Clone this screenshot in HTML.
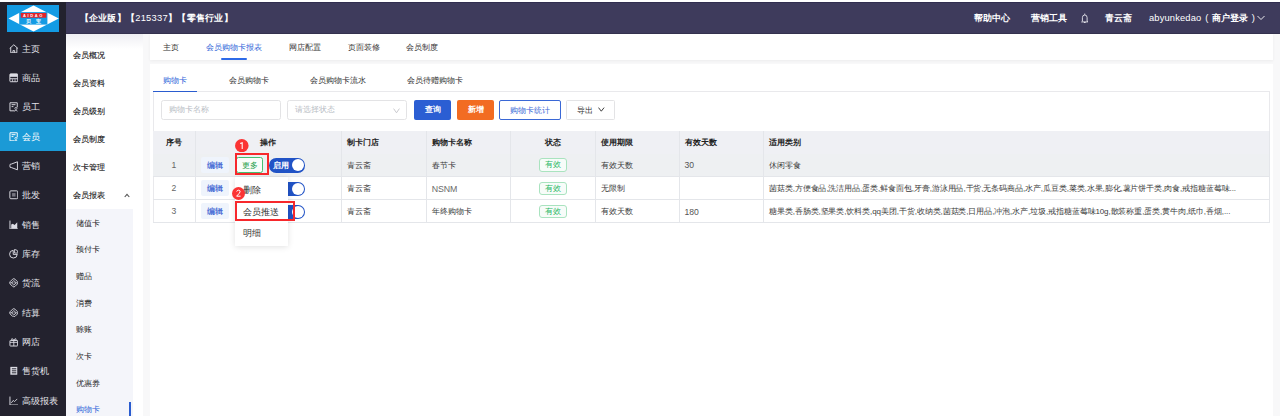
<!DOCTYPE html>
<html><head><meta charset="utf-8">
<style>
*{box-sizing:border-box;margin:0;padding:0}
svg{display:block}
html,body{width:1280px;height:416px;overflow:hidden}
body{position:relative;font-family:"Liberation Sans",sans-serif;background:#f8f8f9;color:#333}
.a{position:absolute;white-space:nowrap}
#top{left:0;top:0;width:1280px;height:2px;background:#fff}
#hdr{left:0;top:2px;width:1280px;height:32px;background:#3e3b5c;border-top:1px solid #312e50;border-bottom:1px solid #35324f}
#side{left:0;top:2px;width:66px;height:414px;background:#23222e}
#logo{left:7px;top:5px;width:52px;height:27px;background:#139be4;overflow:hidden}
.ht{color:#fff;font-size:9.33px;line-height:12px;font-weight:bold}
.hr{color:#fff;font-size:9.33px;line-height:12px;font-weight:bold}
.nav{left:0;width:66px;height:29.33px;color:#e4e4ea;font-size:9.33px;line-height:29.33px}
.nav .ic{position:absolute;left:8.5px;top:9.8px;width:9.6px;height:9.6px}
.nav span{position:absolute;left:22px;top:0.7px}
.nav.on{background:#1b9ad6;color:#fff}
#sub{left:66px;top:34px;width:77px;height:382px;background:linear-gradient(#efeff3,#fff 15px)}
.si{left:73px;margin-top:0.6px;font-size:8px;line-height:12px;color:#111;font-weight:normal;-webkit-text-stroke:0.1px #111}
#subbg{left:66px;top:208.5px;width:67px;height:208px;background:#f4f5fa}
.ssi{left:76px;font-size:8px;line-height:12px;color:#1f1f1f;margin-top:0.5px}
#tabbar{left:150px;top:34px;width:1123px;height:26.3px;background:#fff;box-shadow:0 1px 3px rgba(0,0,0,0.05)}
#card{left:150px;top:64px;width:1123px;height:352px;background:#fff}
.tb{font-size:8px;line-height:12px;color:#333}
.blue{color:#3065d9}
#box{left:153px;top:91px;width:1117px;height:132px;border:1px solid #e9e9ec}
.inp{top:100px;height:20px;border:1px solid #e3e3e5;border-radius:2.5px;background:#fff;font-size:8px;line-height:18.8px;color:#b8bcc4;padding-left:7px}
.btn{top:100px;height:20px;border-radius:2px;font-size:8px;line-height:20.5px;text-align:center;color:#fff;font-weight:bold}
table{position:absolute;left:153px;top:131px;width:1117px;border-collapse:collapse;table-layout:fixed;font-size:8px;color:#3a3a3a}
td,th{border-right:1px solid #e4e6ea;border-bottom:1px solid #e4e6ea;padding:0 0 0 5px;text-align:left;white-space:nowrap;overflow:hidden;text-overflow:ellipsis}
th{height:22.8px;background:#eff0f4;border-bottom:none;font-weight:bold;color:#222}
td{height:23px;padding-top:0.8px}
tr.hov td{background:#eef0f2}
.c{text-align:center;padding:0}
.badge{display:inline-block;vertical-align:middle;width:28px;height:13.2px;border:1px solid #a9e3bf;border-radius:3px;background:#f7fcf9;color:#2cb865;line-height:12.4px;font-size:8px;text-align:center}
</style></head><body>
<div class="a" id="top"></div>
<div class="a" id="hdr"></div>
<div class="a" id="side"></div>
<div class="a" id="logo">
<svg width="52" height="27" viewBox="0 0 52 27"><polygon points="1.5,13.6 26.5,0.6 51.8,13.6 26.5,26.6" fill="#fff"/><rect x="12.2" y="7.1" width="28.2" height="12.5" fill="#139be4"/><rect x="13.8" y="8" width="25.5" height="4.7" fill="#e2232a"/><text x="26.5" y="11.8" font-size="4" fill="#fff" text-anchor="middle" font-family="Liberation Sans" font-weight="bold" letter-spacing="1.6">AIDAO</text><text x="26.5" y="18.2" font-size="4.8" fill="#fff" text-anchor="middle" font-weight="bold">贝　宝</text></svg>
</div>
<div class="a ht" style="left:79.5px;top:12px;letter-spacing:0.28px;font-size:9.33px">【企业版】【<span style="font-weight:normal">215337</span>】【零售行业】</div>
<div class="a hr" style="left:974px;top:12px">帮助中心</div>
<div class="a hr" style="left:1031px;top:12px">营销工具</div>
<div class="a" style="left:1080.5px;top:13px"><svg width="7.5" height="10" viewBox="0 0 7.5 10"><path d="M1.4 8.2V4.6A2.35 2.6 0 0 1 6.1 4.6V8.2L6.9 8.9H0.6Z" fill="none" stroke="#f0f0f5" stroke-width="0.85"/><path d="M3.75 0.6V1.8M2.9 9.5H4.6" stroke="#f0f0f5" stroke-width="0.9"/></svg></div>
<div class="a hr" style="left:1105px;top:12px">青云斋</div>
<div class="a hr" style="left:1149px;top:12px"><span style="font-weight:normal;letter-spacing:0.15px">abyunkedao</span><span style="font-weight:normal;word-spacing:1.2px"> ( </span>商户登录<span style="font-weight:normal;word-spacing:1.2px"> )</span></div>
<div class="a" style="left:1257px;top:15px"><svg width="8" height="6" viewBox="0 0 8 6"><path d="M0.5 1L4 4.5L7.5 1" fill="none" stroke="#fff" stroke-width="0.9"/></svg></div>

<!-- nav -->
<div class="a nav" style="top:34.00px"><svg class="ic" viewBox="0 0 10 10"><path d="M0.7 4.7L5 0.8L9.3 4.7M1.8 3.8V9.2H8.2V3.8M4.1 9.2V6.9H5.9V9.2" fill="none" stroke="#dcdce4" stroke-width="1"/></svg><span>主页</span></div>
<div class="a nav" style="top:63.33px"><svg class="ic" viewBox="0 0 10 10"><rect x="0.9" y="0.9" width="8.2" height="8.2" rx="0.8" fill="none" stroke="#dcdce4" stroke-width="1"/><rect x="1" y="1" width="8" height="3" fill="#dcdce4"/><path d="M1 6H9" stroke="#dcdce4" stroke-width="1"/><path d="M3.7 6.5V9M6.3 6.5V9" stroke="#dcdce4" stroke-width="0.8"/></svg><span>商品</span></div>
<div class="a nav" style="top:92.67px"><svg class="ic" viewBox="0 0 10 10"><path d="M5.8 9.2H1V0.8H8.6V5.6M2.7 2.8H6.8M2.7 4.8H4.6" fill="none" stroke="#dcdce4" stroke-width="1"/><circle cx="7.2" cy="6.7" r="1.1" fill="none" stroke="#dcdce4" stroke-width="0.8"/><path d="M5.6 9.6Q7.2 7.6 8.9 9.6" fill="none" stroke="#dcdce4" stroke-width="0.8"/></svg><span>员工</span></div>
<div class="a nav on" style="top:122.00px"><svg class="ic" viewBox="0 0 10 10"><path d="M5.8 9.2H1V0.8H8.6V5.6M2.7 2.8H6.8M2.7 4.8H4.6" fill="none" stroke="#ffffff" stroke-width="1"/><circle cx="7.2" cy="6.7" r="1.1" fill="none" stroke="#ffffff" stroke-width="0.8"/><path d="M5.6 9.6Q7.2 7.6 8.9 9.6" fill="none" stroke="#ffffff" stroke-width="0.8"/></svg><span>会员</span></div>
<div class="a nav" style="top:151.33px"><svg class="ic" viewBox="0 0 10 10"><path d="M1.2 3.4Q0.6 5 1.2 6.6L2.4 6.8L8.8 9.2V0.8L2.4 3.2Z" fill="none" stroke="#dcdce4" stroke-width="1"/></svg><span>营销</span></div>
<div class="a nav" style="top:180.67px"><svg class="ic" viewBox="0 0 10 10"><rect x="0.9" y="0.9" width="8.2" height="8.2" rx="1" fill="none" stroke="#dcdce4" stroke-width="1"/><rect x="3.2" y="3.2" width="3.6" height="3.6" fill="#dcdce4" opacity="0.45"/></svg><span>批发</span></div>
<div class="a nav" style="top:210.00px"><svg class="ic" viewBox="0 0 10 10"><path d="M1 0.6V9.4H9.4" fill="none" stroke="#dcdce4" stroke-width="1"/><path d="M2.3 9V4.8L4 3.8L5.8 5.2L8.6 2.3V9Z" fill="#dcdce4"/></svg><span>销售</span></div>
<div class="a nav" style="top:239.33px"><svg class="ic" viewBox="0 0 10 10"><path d="M4.4 1.4A4 4 0 1 0 8.6 5.6H4.4Z" fill="none" stroke="#dcdce4" stroke-width="1"/><path d="M5.8 0.4V4.2H9.6A4 4 0 0 0 5.8 0.4Z" fill="none" stroke="#dcdce4" stroke-width="0.9"/></svg><span>库存</span></div>
<div class="a nav" style="top:268.67px"><svg class="ic" viewBox="0 0 10 10"><path d="M3.8 1.2Q5 0.2 6.2 1.2L8.8 3.8Q9.8 5 8.8 6.2L6.2 8.8Q5 9.8 3.8 8.8L1.2 6.2Q0.2 5 1.2 3.8Z" fill="none" stroke="#d6d6de" stroke-width="1"/><path d="M5 2.6L7.4 5L5 7.4L2.6 5Z" fill="none" stroke="#d6d6de" stroke-width="0.9"/><path d="M1 5H9" stroke="#d6d6de" stroke-width="0.7"/><circle cx="5" cy="5" r="0.6" fill="#23222e"/></svg><span>货流</span></div>
<div class="a nav" style="top:298.00px"><svg class="ic" viewBox="0 0 10 10"><path d="M3.8 1.2Q5 0.2 6.2 1.2L8.8 3.8Q9.8 5 8.8 6.2L6.2 8.8Q5 9.8 3.8 8.8L1.2 6.2Q0.2 5 1.2 3.8Z" fill="none" stroke="#d6d6de" stroke-width="1"/><path d="M5 2.6L7.4 5L5 7.4L2.6 5Z" fill="none" stroke="#d6d6de" stroke-width="0.9"/><path d="M1 5H9" stroke="#d6d6de" stroke-width="0.7"/><circle cx="5" cy="5" r="0.6" fill="#23222e"/></svg><span>结算</span></div>
<div class="a nav" style="top:327.33px"><svg class="ic" viewBox="0 0 10 10"><rect x="1" y="3.6" width="8" height="5.8" rx="0.5" fill="none" stroke="#dcdce4" stroke-width="1"/><path d="M1 5.6H9M5 3.6V9.4" stroke="#dcdce4" stroke-width="0.9"/><path d="M5 3.4Q3.4 0.4 2.4 2.2Q2.2 3.2 5 3.4Q7.8 3.2 7.6 2.2Q6.6 0.4 5 3.4" fill="none" stroke="#dcdce4" stroke-width="0.8"/></svg><span>网店</span></div>
<div class="a nav" style="top:356.67px"><svg class="ic" viewBox="0 0 10 10"><rect x="1.4" y="0.9" width="7.2" height="8.2" fill="#dcdce4"/><path d="M3 2.9H7.6M3 5H7.6M3 7.1H7.6" stroke="#23222e" stroke-width="1"/></svg><span>售货机</span></div>
<div class="a nav" style="top:386.00px"><svg class="ic" viewBox="0 0 10 10"><path d="M1 0.6V9.4H9.6" fill="none" stroke="#dcdce4" stroke-width="1"/><path d="M2.4 7.2L4.4 4.6L5.8 5.8L8.6 3" fill="none" stroke="#dcdce4" stroke-width="0.9"/></svg><span>高级报表</span></div>

<!-- submenu -->
<div class="a" id="sub"></div>
<div class="a si" style="top:49px">会员概况</div>
<div class="a si" style="top:77px">会员资料</div>
<div class="a si" style="top:105px">会员级别</div>
<div class="a si" style="top:133px">会员制度</div>
<div class="a si" style="top:161px">次卡管理</div>
<div class="a si" style="top:189px">会员报表</div>
<div class="a" style="left:123.5px;top:192.5px"><svg width="6" height="5" viewBox="0 0 6 5"><path d="M0.7 4L3 1.3L5.3 4" fill="none" stroke="#555" stroke-width="1.1"/></svg></div>
<div class="a" id="subbg"></div>
<div class="a ssi" style="top:217px">储值卡</div>
<div class="a ssi" style="top:243.6px">预付卡</div>
<div class="a ssi" style="top:270.3px">赠品</div>
<div class="a ssi" style="top:297px">消费</div>
<div class="a ssi" style="top:323.6px">赊账</div>
<div class="a ssi" style="top:350.3px">次卡</div>
<div class="a ssi" style="top:377px">优惠券</div>
<div class="a ssi blue" style="top:403.6px">购物卡</div>
<div class="a" style="left:129px;top:402px;width:2px;height:14px;background:#2a5ccf"></div>

<!-- main -->
<div class="a" id="tabbar"></div>
<div class="a tb" style="left:163px;top:41.5px">主页</div>
<div class="a tb blue" style="left:206px;top:41.5px">会员购物卡报表</div>
<div class="a" style="left:221.3px;top:57.5px;width:25.7px;height:2px;background:#2d6ae8;border-radius:1px"></div>
<div class="a tb" style="left:288.5px;top:41.5px">网店配置</div>
<div class="a tb" style="left:347.5px;top:41.5px">页面装修</div>
<div class="a tb" style="left:405.5px;top:41.5px">会员制度</div>

<div class="a" id="card"></div>
<div class="a" id="box"></div>
<div class="a tb blue" style="left:163px;top:74.5px">购物卡</div>
<div class="a tb" style="left:228.5px;top:74.5px">会员购物卡</div>
<div class="a tb" style="left:310px;top:74.5px">会员购物卡流水</div>
<div class="a tb" style="left:407px;top:74.5px">会员待赠购物卡</div>
<div class="a" style="left:153px;top:90.5px;width:44px;height:1.6px;background:#2a5ccf"></div>

<div class="a inp" style="left:160.5px;width:120px">购物卡名称</div>
<div class="a inp" style="left:287px;width:120px">请选择状态</div>
<div class="a" style="left:392.5px;top:107.6px"><svg width="7" height="5.6" viewBox="0 0 7 5.6"><path d="M0.6 0.6L3.5 4.8L6.4 0.6" fill="none" stroke="#c4c4c8" stroke-width="0.9"/></svg></div>
<div class="a btn" style="left:414px;width:37px;background:#2b5ed3">查询</div>
<div class="a btn" style="left:457px;width:37px;background:#f26c22">新增</div>
<div class="a btn" style="left:499px;width:62px;border:1px solid #3a68d6;color:#3a68d6;line-height:19px;background:#fff;font-weight:normal">购物卡统计</div>
<div class="a btn" style="left:566px;width:49px;border:1px solid #e3e3e5;border-radius:1.5px;color:#333;line-height:19.5px;background:#fff;text-align:left;padding-left:10px;font-weight:normal">导出</div>
<div class="a" style="left:598px;top:106.6px"><svg width="6.6" height="5" viewBox="0 0 6.6 5"><path d="M0.5 0.6L3.3 4.2L6.1 0.6" fill="none" stroke="#333" stroke-width="0.95"/></svg></div>

<table>
<colgroup><col style="width:42.3px"><col style="width:146px"><col style="width:85px"><col style="width:84.2px"><col style="width:84.7px"><col style="width:83.9px"><col style="width:84.4px"><col></colgroup>
<tr><th class="c">序号</th><th class="c">操作</th><th>制卡门店</th><th>购物卡名称</th><th class="c">状态</th><th>使用期限</th><th>有效天数</th><th>适用类别</th></tr>
<tr class="hov"><td class="c" style="color:#666;font-size:8.6px">1</td><td></td><td>青云斋</td><td>春节卡</td><td class="c"><span class="badge">有效</span></td><td>有效天数</td><td style="color:#555;font-size:8.6px">30</td><td>休闲零食</td></tr>
<tr><td class="c" style="color:#666;font-size:8.6px">2</td><td></td><td>青云斋</td><td style="color:#6a6a6a;font-size:8.8px;letter-spacing:-0.1px">NSNM</td><td class="c"><span class="badge">有效</span></td><td>无限制</td><td></td><td style="letter-spacing:-0.1px">菌菇类,方便食品,洗洁用品,蛋类,鲜食面包,牙膏,游泳用品,干货,无条码商品,水产,瓜豆类,菜类,水果,膨化,薯片饼干类,肉食,戒指糖蓝莓味...</td></tr>
<tr><td class="c" style="color:#666;font-size:8.6px">3</td><td></td><td>青云斋</td><td>年终购物卡</td><td class="c"><span class="badge">有效</span></td><td>有效天数</td><td style="color:#555;font-size:8.6px">180</td><td style="letter-spacing:-0.1px">糖果类,香肠类,坚果类,饮料类,qq美团,干货,收纳类,菌菇类,日用品,冲泡,水产,垃圾,戒指糖蓝莓味10g,散装称重,蛋类,黄牛肉,纸巾,香烟,...</td></tr>
</table>

<!-- op column -->
<div class="a" style="left:201px;top:156.5px;width:28.3px;height:16.4px;background:#eff4fc;border-radius:2px;color:#2d54d0;font-size:8px;line-height:17px;text-align:center;-webkit-text-stroke:0.15px #2d54d0">编辑</div>
<div class="a" style="left:201px;top:179.8px;width:28.3px;height:16.4px;background:#eff4fc;border-radius:2px;color:#2d54d0;font-size:8px;line-height:17px;text-align:center;-webkit-text-stroke:0.15px #2d54d0">编辑</div>
<div class="a" style="left:201px;top:203.1px;width:28.3px;height:16.4px;background:#eff4fc;border-radius:2px;color:#2d54d0;font-size:8px;line-height:17px;text-align:center;-webkit-text-stroke:0.15px #2d54d0">编辑</div>
<div class="a" style="left:236px;top:156.5px;width:27px;height:16.4px;background:#f9fdfa;border:1px solid #45bf72;border-radius:2.5px;color:#1f9f4c;font-size:8px;line-height:15px;text-align:center">更多</div>
<!-- switches -->
<div class="a" style="left:269px;top:158.2px;width:36px;height:14.4px;background:#2153c6;border-radius:7.2px"></div>
<div class="a" style="left:291.8px;top:159.4px;width:12px;height:12px;background:#fff;border-radius:6px"></div>
<div class="a" style="left:273px;top:159.6px;color:#fff;font-size:8px;line-height:12px;font-weight:bold">启用</div>
<div class="a" style="left:269px;top:181.5px;width:36px;height:14.4px;background:#2153c6;border-radius:7.2px"></div>
<div class="a" style="left:291.8px;top:182.7px;width:12px;height:12px;background:#fff;border-radius:6px"></div>
<div class="a" style="left:269px;top:204.8px;width:36px;height:14.4px;background:#2153c6;border-radius:7.2px"></div>
<div class="a" style="left:291.8px;top:206px;width:12px;height:12px;background:#fff;border-radius:6px"></div>
<!-- dropdown -->
<div class="a" style="left:234.7px;top:176.6px;width:53.3px;height:69px;background:#fff;box-shadow:0 1px 6px rgba(0,0,0,0.12)"></div>
<div class="a" style="left:243px;top:183.5px;font-size:9.33px;line-height:12px;color:#333">删除</div>
<div class="a" style="left:243px;top:205.5px;font-size:9.33px;line-height:12px;color:#333">会员推送</div>
<div class="a" style="left:243px;top:226.7px;font-size:9.33px;line-height:12px;color:#333">明细</div>
<!-- red annotations -->
<div class="a" style="left:235px;top:153.2px;width:33.8px;height:21.4px;border:2px solid #f7282c"></div>
<div class="a" style="left:235px;top:201px;width:60px;height:19.8px;border:2px solid #f7282c"></div>
<svg class="a" style="left:235.1px;top:139.1px" width="13.6" height="13.4" viewBox="0 0 13.6 13.4"><ellipse cx="6.8" cy="6.7" rx="6.8" ry="6.6" fill="#fb3434"/><path d="M5.2 4.6L7.2 3.7V9.9" fill="none" stroke="#fff" stroke-width="1.05"/></svg>
<svg class="a" style="left:232.1px;top:186.6px" width="13" height="13" viewBox="0 0 13 13"><circle cx="6.5" cy="6.5" r="6.5" fill="#fb3434"/><path d="M4.7 4.6Q5 3.2 6.5 3.2Q8.3 3.3 8.1 4.8Q7.9 5.9 4.6 9.2H8.6" fill="none" stroke="#fff" stroke-width="1"/></svg>
</body></html>
